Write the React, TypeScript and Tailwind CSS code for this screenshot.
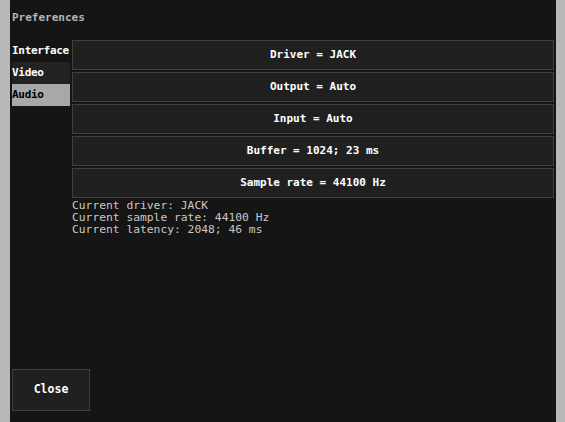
import { useState } from "react";

const FONT = "font-['DejaVu_Sans_Mono',monospace]";

const TABS = ["Interface", "Video", "Audio"];

const SETTINGS = [
  "Driver = JACK",
  "Output = Auto",
  "Input = Auto",
  "Buffer = 1024; 23 ms",
  "Sample rate = 44100 Hz",
];

export default function App() {
  const [tab, setTab] = useState("Audio");

  return (
    <div className={`flex h-[422px] w-[565px] ${FONT} text-[11px]`}>
      <div className="w-[10px] bg-[#b8b8b8]" />

      <div className="flex flex-1 flex-col bg-[#151515] px-[2px]">
        {/* Title */}
        <div className="flex h-[40px] items-start pt-[11px] font-bold text-[#b4b4b4] leading-[14px]">
          Preferences
        </div>

        <div className="flex gap-[2px]">
          {/* Tabs */}
          <div className="flex w-[58px] flex-col">
            {TABS.map((t) => {
              const active = tab === t;
              const idle = t === "Video" ? "bg-[#222222] text-white" : "text-white";
              return (
                <button
                  key={t}
                  onClick={() => setTab(t)}
                  className={`flex h-[22px] items-center text-left font-bold tracking-[-0.3px] ${active ? "bg-[#a8a8a8] text-black" : idle}`}
                >
                  {t}
                </button>
              );
            })}
          </div>

          {/* Settings */}
          <div className="flex flex-1 flex-col">
            <div className="flex flex-col gap-[2px]">
              {SETTINGS.map((s) => (
                <button
                  key={s}
                  className="flex h-[30px] items-center justify-center border border-[#404040] bg-[#202020] font-bold text-white"
                >
                  {s}
                </button>
              ))}
            </div>
            <div className="mt-[2px] text-[11.3px] text-[#c8c8c8] leading-[12px]">
              <div>Current driver: JACK</div>
              <div>Current sample rate: 44100 Hz</div>
              <div>Current latency: 2048; 46 ms</div>
            </div>
          </div>
        </div>

        <div className="flex-1" />

        <button className="mb-[11px] flex h-[42px] w-[78px] items-center justify-center border border-[#404040] bg-[#202020] text-[11.5px] font-bold text-white">
          Close
        </button>
      </div>

      <div className="w-[9px] bg-[#b8b8b8]" />
    </div>
  );
}
